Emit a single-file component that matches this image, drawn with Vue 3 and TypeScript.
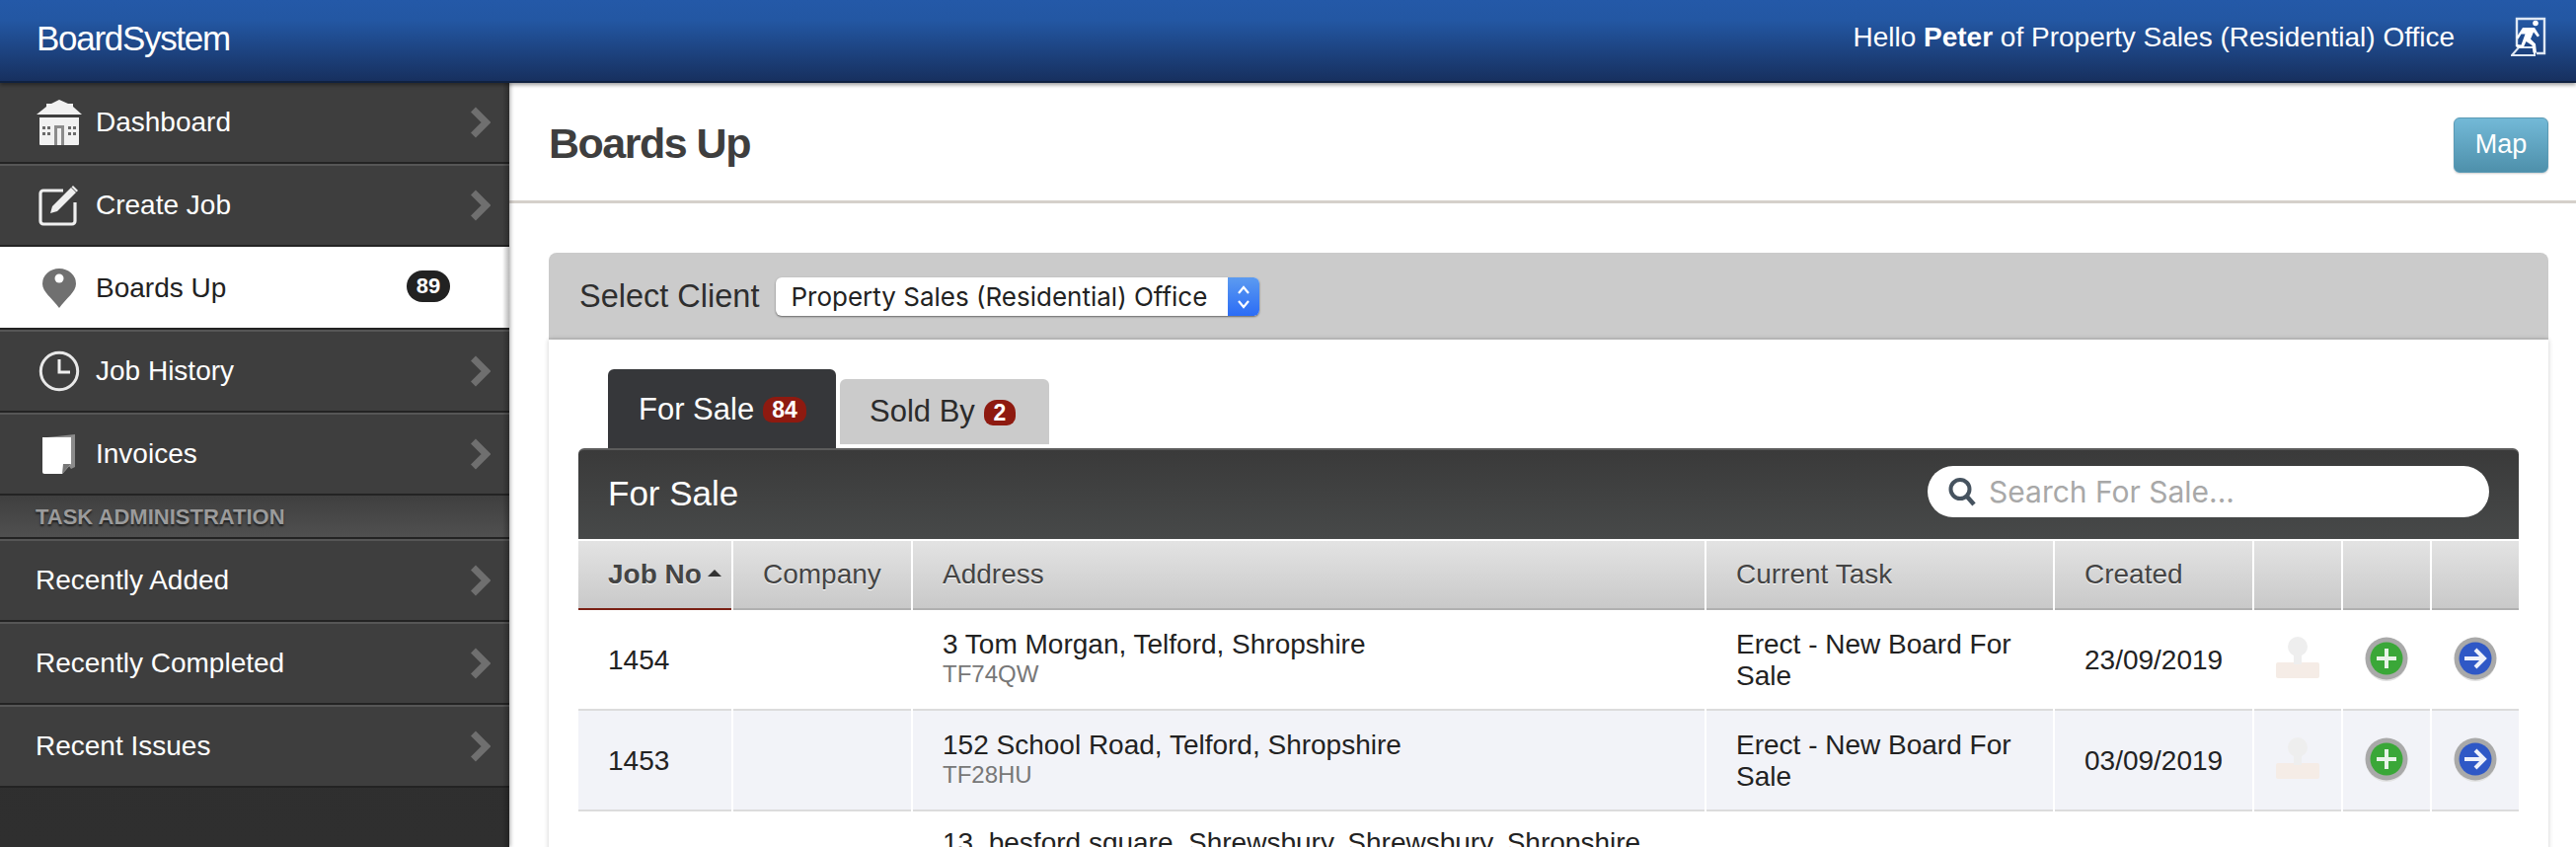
<template>
  <div class="app">
    <header class="topbar">
      <div class="logo">BoardSystem</div>
      <div class="user">
        <span>Hello <b>Peter</b> of Property Sales (Residential) Office</span>
        <svg class="exit" width="36" height="40" viewBox="0 0 36 40">
          <path d="M6 30V2h28v35H26" fill="none" stroke="#dfe8f4" stroke-width="2.400" />
          <path d="M1 39l7-8h16v8z" fill="none" stroke="#dfe8f4" stroke-width="2" />
          <circle cx="25" cy="6.500" r="2.800" fill="#fff" />
          <path d="M12 11h12l5 8-2 1.500-4-5-3 7 5 5 1 9h-3.500l-1-7.500-6-4-3 6.500-7-.5.5-3 4.500.5 4-11h-4l-3 5-2-1.500z" fill="#fff" />
        </svg>
      </div>
    </header>

    <div class="body">
      <nav class="sidebar">
        <template v-for="item in navItems" :key="item.label">
          <div v-if="item.section" class="nav-section">{{ item.label }}</div>
          <a v-else class="nav-item" :class="{ active: item.active }">
            <span v-if="item.icon" class="nav-icon">
              <svg v-if="item.icon === 'house'" width="46" height="46" viewBox="0 0 46 46">
                <path d="M0 15L10 7V4h5l8-4 9 4h5v3l9 8z" fill="#f1f1f1" />
                <path d="M3 18h40v27a1 1 0 0 1-1 1H4a1 1 0 0 1-1-1z" fill="#f1f1f1" />
                <path d="M18 26h10v20h-3V29h-4v17h-3z" fill="#8c8c8c" />
                <path d="M6 27h3v3H6zM11 27h3v3h-3zM6 33h3v3H6zM11 33h3v3h-3zM32 27h3v3h-3zM37 27h3v3h-3zM32 33h3v3h-3zM37 33h3v3h-3z" fill="#6a6a6a" />
              </svg>
              <svg v-else-if="item.icon === 'edit'" width="42" height="42" viewBox="0 0 42 42">
                <path d="M25 6H5a3 3 0 0 0-3 3v28a3 3 0 0 0 3 3h29a3 3 0 0 0 3-3V18" fill="none" stroke="#efefef" stroke-width="3.200" />
                <path d="M14 22L33 3l5 5-19 19-7 2z" fill="#efefef" />
                <path d="M35 1l5 5-1.500 1.500-5-5z" fill="#efefef" />
              </svg>
              <svg v-else-if="item.icon === 'pin'" width="34" height="40" viewBox="0 0 34 40">
                <path d="M17 40C10 30 0 24 0 15.500a17 15.500 0 0 1 34 0C34 24 24 30 17 40z" fill="#707070" />
                <circle cx="17" cy="10" r="4.500" fill="#fff" />
              </svg>
              <svg v-else-if="item.icon === 'clock'" width="42" height="42" viewBox="0 0 42 42">
                <circle cx="21" cy="21" r="18.700" fill="none" stroke="#e8e8e8" stroke-width="3" />
                <path d="M21 9v13h11" fill="none" stroke="#efefef" stroke-width="3" />
              </svg>
              <svg v-else width="34" height="40" viewBox="0 0 34 40">
                <path d="M5 3l28-3v33l-4 2z" fill="#8b8b8b" />
                <path d="M0 3h29v27l-9 10H2a2 2 0 0 1-2-2z" fill="#fff" />
                <path d="M20 40l1-10h8z" fill="#777" />
              </svg>
            </span>
            <span class="nav-label">{{ item.label }}</span>
            <span v-if="item.count" class="nav-count">{{ item.count }}</span>
            <svg v-if="!item.active" class="chevron" width="21" height="32" viewBox="0 0 21 32">
              <path d="M3.500 3L16.500 16L3.500 29" fill="none" stroke="#6f6f6f" stroke-width="7" />
            </svg>
          </a>
        </template>
      </nav>

      <main class="main">
        <div class="page-head">
          <h1>Boards Up</h1>
          <button class="map-btn">Map</button>
        </div>

        <section class="panel">
          <div class="panel-head">
            <label>Select Client</label>
            <div class="client-select">
              <span>Property Sales (Residential) Office</span>
              <span class="stepper">
                <svg width="14" height="30" viewBox="0 0 14 30">
                  <path d="M2 11l5-6 5 6M2 19l5 6 5-6" fill="none" stroke="#fff" stroke-width="2.200" />
                </svg>
              </span>
            </div>
          </div>

          <div class="panel-body">
            <div class="tabs">
              <div class="tab on">For Sale <span class="tab-badge">84</span></div>
              <div class="tab">Sold By <span class="tab-badge">2</span></div>
            </div>

            <div class="table-bar">
              <span>For Sale</span>
              <div class="search">
                <svg width="30" height="30" viewBox="0 0 30 30">
                  <circle cx="13" cy="12.500" r="9.500" fill="none" stroke="#46535f" stroke-width="4" />
                  <path d="M20 20l7 8" stroke="#46535f" stroke-width="4.500" />
                </svg>
                <span>Search For Sale...</span>
              </div>
            </div>

            <div class="grid-row grid-head">
              <div class="sorted">Job No<i class="sort-arrow"></i></div>
              <div>Company</div>
              <div>Address</div>
              <div>Current Task</div>
              <div>Created</div>
              <div></div>
              <div></div>
              <div></div>
            </div>

            <div v-for="(job, i) in jobs" :key="job.no" class="grid-row job" :class="{ alt: i % 2 === 1 }">
              <div>{{ job.no }}</div>
              <div></div>
              <div class="address">
                <div>{{ job.address }}</div>
                <small>{{ job.postcode }}</small>
              </div>
              <div>Erect - New Board For Sale</div>
              <div>{{ job.created }}</div>
              <div class="act">
                <svg width="44" height="42" viewBox="0 0 44 42">
                  <rect x="0" y="26" width="44" height="16" rx="2" fill="#f5ece6" />
                  <rect x="18" y="16" width="8" height="12" fill="#eeeeee" />
                  <circle cx="22" cy="10" r="10" fill="#eeeeee" />
                </svg>
              </div>
              <div class="act round">
                <svg width="44" height="46" viewBox="0 0 44 46">
                  <circle cx="22" cy="24" r="21" fill="#e3e3e3" />
                  <circle cx="22" cy="22" r="21.500" fill="#a9a9a9" />
                  <circle cx="22" cy="22" r="16.500" fill="#3aa738" />
                  <path d="M22 12v20M12 22h20" stroke="#e8f3e8" stroke-width="4" />
                </svg>
              </div>
              <div class="act round">
                <svg width="44" height="46" viewBox="0 0 44 46">
                  <circle cx="22" cy="24" r="21" fill="#e3e3e3" />
                  <circle cx="22" cy="22" r="21.500" fill="#a9a9a9" />
                  <circle cx="22" cy="22" r="16.500" fill="#2f58c6" />
                  <path d="M11 22h20M22 13l9 9-9 9" fill="none" stroke="#eef1fa" stroke-width="4" />
                </svg>
              </div>
            </div>

            <div class="grid-row last">
              <div></div>
              <div></div>
              <div>13, besford square, Shrewsbury, Shrewsbury, Shropshire</div>
            </div>
          </div>
        </section>
      </main>
    </div>
  </div>
</template>

<script setup lang="ts">
interface NavItem {
  label: string
  icon?: string
  active?: boolean
  count?: number
  section?: boolean
}

const navItems: NavItem[] = [
  { label: 'Dashboard', icon: 'house' },
  { label: 'Create Job', icon: 'edit' },
  { label: 'Boards Up', icon: 'pin', active: true, count: 89 },
  { label: 'Job History', icon: 'clock' },
  { label: 'Invoices', icon: 'doc' },
  { label: 'TASK ADMINISTRATION', section: true },
  { label: 'Recently Added' },
  { label: 'Recently Completed' },
  { label: 'Recent Issues' },
]

const jobs = [
  { no: 1454, address: '3 Tom Morgan, Telford, Shropshire', postcode: 'TF74QW', created: '23/09/2019' },
  { no: 1453, address: '152 School Road, Telford, Shropshire', postcode: 'TF28HU', created: '03/09/2019' },
]
</script>

<style>
html, body {
  margin: 0;
  background: #fff;
}
</style>

<style scoped>
.app {
  width: 2610px;
  height: 858px;
  overflow: hidden;
  display: flex;
  flex-direction: column;
  font-family: "Liberation Sans", Arial, sans-serif;
  font-size: 28px;
  color: #222;
}

.topbar {
  flex: none;
  height: 84px;
  box-sizing: border-box;
  border-bottom: 2px solid #0f2140;
  background: linear-gradient(#2459a8, #2357a3 25%, #17305f);
  box-shadow: 0 2px 4px rgba(0, 0, 0, .4);
  color: #fff;
  display: flex;
  align-items: center;
  justify-content: space-between;
  padding: 0 30px 0 37px;
  position: relative;
  z-index: 2;
}
.logo {
  font-size: 35px;
  letter-spacing: -1.300px;
  margin-top: -5px;
}
.user {
  display: flex;
  align-items: center;
  gap: 57px;
}
.user span {
  margin-top: -6px;
}
.exit {
  margin-top: -8px;
}

.body {
  flex: 1;
  display: flex;
  min-height: 0;
}

.sidebar {
  flex: none;
  width: 516px;
  margin-top: -2px;
  background: linear-gradient(#2b2b2b, #2f2f2f);
  color: #fff;
  position: relative;
  box-shadow: 1px 0 4px rgba(0, 0, 0, .35);
  z-index: 1;
}
.sidebar::after {
  content: "";
  position: absolute;
  top: 0;
  bottom: 0;
  right: 0;
  width: 7px;
  background: linear-gradient(to right, rgba(0, 0, 0, 0), rgba(0, 0, 0, .28));
  pointer-events: none;
}
.nav-item {
  height: 84px;
  box-sizing: border-box;
  border-top: 2px solid #565656;
  border-bottom: 2px solid #232323;
  background: #3e3e3e;
  display: flex;
  align-items: center;
  padding: 0 19px 0 36px;
  position: relative;
}
.nav-item.active {
  background: #fff;
  border-top-color: #fff;
  color: #222;
}
.nav-icon {
  width: 48px;
  margin-right: 13px;
  display: flex;
  justify-content: center;
}
.nav-icon svg {
  display: block;
}
.nav-label {
  flex: 1;
}
.nav-count {
  position: absolute;
  left: 412px;
  top: 22px;
  width: 44px;
  height: 32px;
  border-radius: 16px;
  background: #222;
  color: #fff;
  font-size: 22px;
  font-weight: 700;
  line-height: 32px;
  text-align: center;
}
.nav-section {
  height: 44px;
  box-sizing: border-box;
  border-bottom: 2px solid #232323;
  background: linear-gradient(#3f3f3f, #505050);
  color: #9b9b9b;
  font-size: 22px;
  font-weight: 700;
  line-height: 44px;
  padding-left: 36px;
  text-shadow: 0 2px 2px rgba(0, 0, 0, .6);
}

.main {
  flex: 1;
  min-width: 0;
}
.page-head {
  height: 122px;
  box-sizing: border-box;
  border-bottom: 3px solid #d5d0cb;
  display: flex;
  align-items: center;
  justify-content: space-between;
  padding: 0 28px 0 40px;
}
h1 {
  margin: 3px 0 0;
  font-size: 43px;
  font-weight: 700;
  letter-spacing: -1.500px;
  color: #3e3e3e;
}
.map-btn {
  width: 96px;
  height: 56px;
  margin-top: 6px;
  border: 1px solid #5a9ab5;
  border-radius: 6px;
  background: linear-gradient(#73b9d7, #4e90ab);
  color: #fff;
  font: 27px "Liberation Sans", Arial, sans-serif;
  padding: 0;
  box-shadow: 0 1px 2px rgba(0, 0, 0, .2);
}

.panel {
  margin: 50px 28px 0 40px;
}
.panel-head {
  height: 88px;
  box-sizing: border-box;
  border-bottom: 2px solid #c2c2c2;
  background: #cbcbcb;
  border-radius: 8px 8px 0 0;
  display: flex;
  align-items: center;
  padding: 0 0 0 31px;
  gap: 17px;
}
.panel-head label {
  font-size: 32.500px;
  color: #2e2e2e;
  margin-top: 2px;
}
.client-select {
  width: 490px;
  height: 39px;
  box-sizing: border-box;
  margin-top: 3px;
  border-radius: 6px;
  background: #fff;
  box-shadow: 0 1px 2px rgba(0, 0, 0, .5);
  font-family: Inter, "Noto Sans", sans-serif;
  font-size: 26px;
  color: #222;
  display: flex;
  align-items: center;
  justify-content: space-between;
  padding-left: 15px;
  overflow: hidden;
}
.stepper {
  width: 32px;
  height: 100%;
  background: linear-gradient(#5c9bf0, #2b6cf6);
  display: flex;
  align-items: center;
  justify-content: center;
}
.panel-body {
  padding: 30px 30px 0;
  background: #fff;
  box-shadow: 0 0 5px rgba(0, 0, 0, .2);
}
.tabs {
  height: 80px;
  display: flex;
  align-items: flex-start;
  gap: 4px;
  padding-left: 30px;
}
.tab {
  width: 212px;
  height: 66px;
  margin-top: 10px;
  box-sizing: border-box;
  border-radius: 6px 6px 0 0;
  background: #cbcbcb;
  color: #2b2b2b;
  font-size: 31px;
  padding: 15px 0 0 30px;
  display: flex;
  gap: 9px;
  align-items: flex-start;
}
.tab.on {
  width: 231px;
  height: 80px;
  margin-top: 0;
  background: #36373a;
  color: #fff;
  padding-top: 23px;
  padding-left: 31px;
}
.tab-badge {
  min-width: 32px;
  height: 26px;
  margin-top: 6px;
  box-sizing: border-box;
  padding: 0 9px;
  border-radius: 13px 13px 9px 9px;
  background: #8e1a10;
  color: #fff;
  font-size: 23px;
  font-weight: 700;
  line-height: 26px;
  text-align: center;
}
.tab.on .tab-badge {
  margin-top: 5px;
}
.table-bar {
  height: 92px;
  box-sizing: border-box;
  border-top: 2px solid #5c5c5c;
  border-radius: 6px 6px 0 0;
  background: linear-gradient(#3a3a3a, #474949);
  color: #fff;
  font-size: 35px;
  display: flex;
  align-items: center;
  justify-content: space-between;
  padding: 0 30px 0 30px;
}
.table-bar > span {
  margin-top: -2px;
}
.search {
  width: 569px;
  height: 52px;
  margin-top: -6px;
  box-sizing: border-box;
  border-radius: 26px;
  background: #fff;
  display: flex;
  align-items: center;
  gap: 12px;
  padding-left: 20px;
  color: #a8a8a8;
  font-family: Inter, "Noto Sans", sans-serif;
  font-size: 30px;
}
.search svg {
  flex: none;
}

.grid-row {
  display: grid;
  grid-template-columns: 155px 180px 802px 351px 200px 88px 88px 88px;
  column-gap: 2px;
}
.grid-head {
  margin-top: 2px;
  height: 70px;
  color: #444;
  text-shadow: 0 1px 0 #fff;
}
.grid-head > div {
  height: 70px;
  box-sizing: border-box;
  border-bottom: 2px solid #b0b0b0;
  background: linear-gradient(#e3e3e3, #c9c9c9);
  padding: 0 0 0 30px;
  display: flex;
  align-items: center;
}
.grid-head .sorted {
  border-bottom-color: #7a2015;
  font-weight: 700;
}
.sort-arrow {
  width: 0;
  height: 0;
  margin: -4px 0 0 6px;
  border-left: 7.500px solid transparent;
  border-right: 7.500px solid transparent;
  border-bottom: 7px solid #333;
}
.job > div {
  height: 102px;
  box-sizing: border-box;
  border-bottom: 2px solid #dcdcdc;
  padding: 2px 14px 0 30px;
  line-height: 32px;
  display: flex;
  align-items: center;
}
.job.alt > div {
  background: #f2f3f8;
}
.job > .address {
  display: block;
  padding-top: 19px;
}
.address small {
  display: block;
  color: #777;
  font-size: 24px;
  line-height: 28px;
}
.job > .act {
  padding: 0 0 4px;
  justify-content: center;
}
.job > .act.round {
  padding: 0 0 1px;
}
.last > div {
  padding: 16px 0 0 30px;
  white-space: nowrap;
}
</style>
